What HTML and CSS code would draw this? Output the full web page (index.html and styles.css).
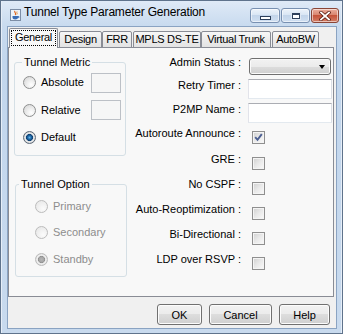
FILE: index.html
```html
<!DOCTYPE html>
<html>
<head>
<meta charset="utf-8">
<link rel="stylesheet" href="styles.css">
</head>
<body>
<div class="window">
  <div class="titlebar">
    <svg class="app-icon" width="11" height="12" viewBox="0 0 11 12">
      <rect x="0.5" y="0.5" width="10" height="11" fill="#eef3f9" stroke="#7d8ea6"/>
      <path d="M5 2 C3.5 3.5 7 4 5.2 6" fill="none" stroke="#e0651f" stroke-width="1.2"/>
      <path d="M7 2.5 C6 3.5 8 4 6.8 5.5" fill="none" stroke="#e08a2f" stroke-width="0.9"/>
      <path d="M2.5 7 H8 V8.5 C8 9.8 6.8 10.5 5.2 10.5 C3.7 10.5 2.5 9.8 2.5 8.5 Z" fill="#3a6db5"/>
      <path d="M8 7.5 H9 V8.6 H8" fill="none" stroke="#3a6db5" stroke-width="0.8"/>
    </svg>
    <span class="title">Tunnel Type Parameter Generation</span>
    <div class="caption">
      <span class="cap cap-min"><i class="g-min"></i></span>
      <span class="cap cap-max"><i class="g-max"></i></span>
      <span class="cap cap-close">
        <svg width="12" height="10" viewBox="0 0 12 10">
          <path d="M2 1.5 L10 8.5 M10 1.5 L2 8.5" stroke="#5a1d12" stroke-width="3.4" stroke-linecap="square"/>
          <path d="M2 1.5 L10 8.5 M10 1.5 L2 8.5" stroke="#ffffff" stroke-width="1.8" stroke-linecap="square"/>
        </svg>
      </span>
    </div>
  </div>
  <div class="client">
    <div class="tabs">
      <div class="tab tab-active w-general"><span class="focus">General</span></div>
      <div class="tab w-design">Design</div>
      <div class="tab w-frr">FRR</div>
      <div class="tab w-mpls">MPLS DS-TE</div>
      <div class="tab w-vt">Virtual Trunk</div>
      <div class="tab w-autobw">AutoBW</div>
    </div>
    <div class="panel">
      <div class="left-col">
        <fieldset class="group metric">
          <legend>Tunnel Metric</legend>
          <div class="mrow"><span class="radio"><span class="rb"></span>Absolute</span><span class="sfield"></span></div>
          <div class="mrow"><span class="radio"><span class="rb"></span>Relative</span><span class="sfield"></span></div>
          <div class="mrow"><span class="radio"><span class="rb rb-on"></span>Default</span></div>
        </fieldset>
        <fieldset class="group option">
          <legend>Tunnel Option</legend>
          <div class="orow"><span class="radio disabled"><span class="rb rb-dis"></span>Primary</span></div>
          <div class="orow"><span class="radio disabled"><span class="rb rb-dis"></span>Secondary</span></div>
          <div class="orow"><span class="radio disabled"><span class="rb rb-dis rb-dis-on"></span>Standby</span></div>
        </fieldset>
      </div>
      <div class="right-col">
        <span class="lbl lbl-first">Admin Status :</span>
        <span class="combo"><i class="arrow"></i></span>
        <span class="lbl">Retry Timer :</span>
        <span class="tfield"></span>
        <span class="lbl">P2MP Name :</span>
        <span class="tfield"></span>
        <span class="lbl">Autoroute Announce :</span>
        <span class="chk chk-on">
          <svg width="11" height="11" viewBox="0 0 11 11"><path d="M2.2 5.2 L4.5 7.8 L8.8 2.2" fill="none" stroke="#4c5f92" stroke-width="1.9"/></svg>
        </span>
        <span class="lbl">GRE :</span>
        <span class="chk"></span>
        <span class="lbl">No CSPF :</span>
        <span class="chk"></span>
        <span class="lbl">Auto-Reoptimization :</span>
        <span class="chk"></span>
        <span class="lbl">Bi-Directional :</span>
        <span class="chk"></span>
        <span class="lbl">LDP over RSVP :</span>
        <span class="chk"></span>
      </div>
    </div>
    <div class="footer">
      <button class="btn w-ok">OK</button>
      <button class="btn w-cancel">Cancel</button>
      <button class="btn w-help">Help</button>
    </div>
  </div>
</div>
</body>
</html>
```

FILE: styles.css
```css
html, body {
  margin: 0;
  padding: 0;
}
body {
  font-family: "Liberation Sans", Arial, sans-serif;
  font-size: 11px;
  color: #000;
  background: #fff;
}
.window {
  width: 343px;
  height: 334px;
  box-sizing: border-box;
  border: 1px solid #5f738c;
  padding: 0 5px 4px 6px;
  background: linear-gradient(#dfeaf7 0, #c9dbef 24px, #c2d6ed 60px, #c8daee 100%);
  display: flex;
  flex-direction: column;
  box-shadow: inset 1px 0 0 #e6eef8, inset -1px 0 0 #e6eef8;
}
.titlebar {
  height: 25px;
  margin: 0 -5px 0 -6px;
  padding: 0 3px 0 9px;
  box-sizing: border-box;
  display: flex;
  align-items: flex-start;
  flex-shrink: 0;
}
.app-icon {
  margin-top: 8px;
  flex-shrink: 0;
}
.title {
  margin-left: 3px;
  margin-top: 4px;
  font-size: 12px;
  line-height: 15px;
  letter-spacing: -0.2px;
  color: #000;
  white-space: nowrap;
}
.caption {
  margin-left: auto;
  margin-top: 7px;
  display: flex;
  gap: 1px;
}
.cap {
  box-sizing: border-box;
  height: 15px;
  border: 1px solid #7890b1;
  border-radius: 3px;
  display: flex;
  align-items: center;
  justify-content: center;
  background: linear-gradient(#edf3fa 0, #d9e6f4 45%, #c3d5ea 50%, #cfdff1 100%);
  box-shadow: inset 0 0 0 1px rgba(255,255,255,0.55);
}
.cap-min { width: 30px; }
.cap-max { width: 29px; }
.cap-close {
  width: 28px;
  border-color: #8a4536;
  background: linear-gradient(#ebae9e 0, #d98670 45%, #c5533a 50%, #d37e66 100%);
}
.g-min {
  display: block;
  width: 9px;
  height: 2px;
  border: 1px solid #2d3f5a;
  background: #fff;
  margin-top: 5px;
}
.g-max {
  display: block;
  width: 6px;
  height: 3px;
  border: 1px solid #2d3f5a;
  border-top-width: 2px;
  background: #fff;
  box-shadow: 0 0 0 1px #dfe8f3;
}
.client {
  flex: 1;
  border: 1px solid #8aa3c2;
  background: #f0f0f0;
  display: flex;
  flex-direction: column;
  min-height: 0;
}
.tabs {
  display: flex;
  align-items: flex-end;
  height: 21px;
  margin-bottom: -1px;
  padding-left: 1px;
  box-sizing: border-box;
  position: relative;
  z-index: 1;
  flex-shrink: 0;
}
.tab {
  box-sizing: border-box;
  height: 17px;
  border: 1px solid #898c95;
  border-radius: 2px 2px 0 0;
  background: linear-gradient(#f7f7f7 0, #ececec 50%, #e3e3e3 100%);
  text-align: center;
  line-height: 13px;
  padding-top: 1px;
  white-space: nowrap;
  letter-spacing: -0.3px;
}
.tab-active {
  height: 20px;
  border-bottom: none;
  background: #f8f8f8;
  padding-top: 0;
}
.focus {
  display: block;
  margin: 1px 1px 0;
  border: 1px dotted #000;
  height: 14px;
  line-height: 13px;
}
.w-general { width: 49px; }
.w-design { width: 43px; margin-left: 1px; }
.w-frr { width: 30px; }
.w-mpls { width: 68px; margin-left: 1px; }
.w-vt { width: 70px; }
.w-autobw { width: 47px; margin-left: 1px; }
.panel {
  box-sizing: border-box;
  height: 250px;
  flex-shrink: 0;
  margin-right: 2px;
  border: 1px solid #898c95;
  background: #f8f8f8;
  display: flex;
  padding: 0 1px 0 5px;
}
.left-col {
  width: 113px;
  flex-shrink: 0;
  padding-top: 8px;
  box-sizing: border-box;
}
.group {
  margin: 0;
  border: 1px solid #d5dfe5;
  border-radius: 3px;
  min-width: 0;
  box-sizing: border-box;
  width: 112px;
}
.group legend {
  padding: 0 2px;
  line-height: 13px;
  margin: 0;
}
.metric {
  padding: 0 0 3.5px 7px;
}
.option {
  margin: 22px 0 0 1px;
  padding: 2px 0 3.5px 3px;
}
.mrow {
  height: 27.5px;
  display: grid;
  grid-template-columns: 69px 30px;
  align-items: center;
}
.orow {
  height: 26.5px;
  display: flex;
  align-items: center;
  padding-left: 16px;
}
.radio {
  display: flex;
  align-items: center;
  gap: 5px;
  line-height: 13px;
}
.metric .radio { margin-left: 1px; }
.disabled { color: #8d8d8d; }
.rb {
  width: 13px;
  height: 13px;
  box-sizing: border-box;
  border-radius: 50%;
  border: 1px solid #8e8f8f;
  background: radial-gradient(circle at 65% 70%, #ffffff 0, #f0f0f0 35%, #d2d2d2 100%);
  flex-shrink: 0;
}
.rb-on {
  border-color: #5d6a78;
  background: radial-gradient(circle at 50% 50%, #5fb2ea 0, #1d69a8 1.8px, #0f3f70 3.2px, #cfd6dd 3.8px, #f3f3f3 4.6px, #c8c8c8 5.5px);
}
.rb-dis {
  border-color: #bcbcbc;
  background: radial-gradient(circle at 65% 70%, #fbfbfb 0, #f2f2f2 40%, #e4e4e4 100%);
}
.rb-dis-on {
  background: radial-gradient(circle at 50% 50%, #b5b5b5 0, #a5a5a5 2.6px, #8f8f8f 3.2px, #e3e3e3 3.8px, #f4f4f4 4.6px, #dcdcdc 5.5px);
}
.sfield {
  height: 20px;
  box-sizing: border-box;
  border: 1px solid #bcc0c6;
  background: #f6f6f6;
}
.right-col {
  flex: 1;
  display: grid;
  grid-template-columns: 1fr 84px;
  grid-template-rows: 22px 24px 24px 26px 25px 25px 25px 25px 25px;
  column-gap: 7px;
  align-items: start;
  padding-top: 7px;
  align-content: start;
}
.lbl {
  text-align: right;
  line-height: 13px;
  margin-top: 2px;
  white-space: nowrap;
}
.lbl-first { margin-top: 1px; }
.combo {
  margin: 3px 0 0 1px;
  width: 82px;
  height: 17px;
  box-sizing: border-box;
  border: 1px solid #707070;
  border-radius: 3px;
  background: linear-gradient(#f2f2f2 0, #ebebeb 50%, #dddddd 50%, #cfcfcf 100%);
  box-shadow: inset 0 0 0 1px #fbfbfb;
  display: flex;
  align-items: center;
  justify-content: flex-end;
  padding-right: 5px;
}
.arrow {
  display: block;
  width: 0;
  height: 0;
  border-left: 3.5px solid transparent;
  border-right: 3.5px solid transparent;
  border-top: 4px solid #000;
}
.tfield {
  margin-top: 2px;
  height: 20px;
  box-sizing: border-box;
  border: 1px solid;
  border-color: #abadb3 #dbdfe6 #e3e9ef #e2e3ea;
  background: #fff;
}
.chk {
  margin: 6px 0 0 4px;
  width: 13px;
  height: 13px;
  box-sizing: border-box;
  border: 1px solid #8f8f8f;
  background: linear-gradient(135deg, #cfcfcf 0, #e9e9e9 50%, #fafafa 100%);
  box-shadow: inset 0 0 0 1px #f4f4f4;
  display: flex;
  align-items: center;
  justify-content: center;
}
.footer {
  flex: 1;
  display: flex;
  justify-content: flex-end;
  align-items: flex-start;
  gap: 7px;
  padding: 7px 6px 0 0;
}
.btn {
  box-sizing: border-box;
  height: 21px;
  border: 1px solid #707070;
  border-radius: 3px;
  background: linear-gradient(#f2f2f2 0, #ebebeb 50%, #dddddd 50%, #cfcfcf 100%);
  box-shadow: inset 0 0 0 1px #fcfcfc;
  font-family: "Liberation Sans", Arial, sans-serif;
  font-size: 11px;
  color: #000;
  padding: 0;
  margin: 0;
}
.w-ok { width: 45px; }
.w-cancel { width: 63px; }
.w-help { width: 51px; }
```
